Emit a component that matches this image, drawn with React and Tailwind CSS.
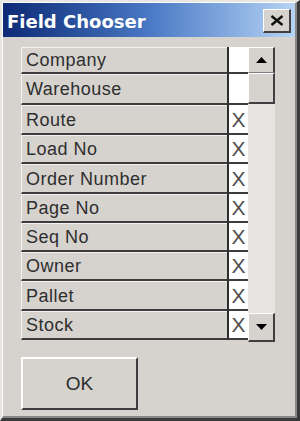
import React from "react";

const rows = [
  { label: "Company", h: "h-[27px]", x: false },
  { label: "Warehouse", h: "h-[31px]", x: false },
  { label: "Route", h: "h-[30px]", x: true },
  { label: "Load No", h: "h-[29px]", x: true },
  { label: "Order Number", h: "h-[30px]", x: true },
  { label: "Page No", h: "h-[29px]", x: true },
  { label: "Seq No", h: "h-[29px]", x: true },
  { label: "Owner", h: "h-[29px]", x: true },
  { label: "Pallet", h: "h-[30px]", x: true },
  { label: "Stock", h: "h-[29px]", x: true },
];

function Tri({ down }) {
  return (
    <svg width="11" height="6" viewBox="0 0 11 6">
      {down ? (
        <polygon points="0,0 11,0 5.5,6" fill="#000" />
      ) : (
        <polygon points="0,6 11,6 5.5,0" fill="#000" />
      )}
    </svg>
  );
}

export default function App() {
  return (
    <div className="w-[300px] h-[421px] bg-[#d6d3ce] border-t-2 border-l-2 border-t-[#e8e6e2] border-l-[#e8e6e2] border-r-[3px] border-b-[3px] border-r-[#3a3a3a] border-b-[#3a3a3a] flex flex-col overflow-hidden">
      <div className="flex-1 flex flex-col border-t border-l border-t-white border-l-white border-r-2 border-b-2 border-r-[#8a8886] border-b-[#8a8886]">
        {/* title bar */}
        <div className="h-[34px] flex items-center pl-[4px] pr-[4px] bg-gradient-to-r from-[#0e2a76] via-[#4a78c4] to-[#b6d4f4]">
          <span className="text-white font-bold text-[18px] leading-none mt-[4px] tracking-[0px] [font-family:'DejaVu_Sans',sans-serif]">
            Field Chooser
          </span>
          <div className="ml-auto w-[28px] h-[24px] bg-[#d6d3ce] border-t border-l border-t-white border-l-white border-r-2 border-b-2 border-r-[#404040] border-b-[#404040] flex items-center justify-center mt-[1px]">
            <svg width="14" height="11" viewBox="0 0 14 11">
              <path d="M1.5 1 L12.5 10 M12.5 1 L1.5 10" stroke="#111" strokeWidth="2.4" />
            </svg>
          </div>
        </div>

        {/* body */}
        <div className="flex flex-col pl-[18px] pt-[10px]">
          <div className="flex items-start">
            <div className="flex flex-col">
              {rows.map((r) => (
                <div key={r.label} className={`flex ${r.h}`}>
                  <div className="w-[206px] bg-[#d6d3ce] border-t border-l border-t-[#f4f3f1] border-l-[#f4f3f1] border-b-2 border-b-[#3c3c3c] flex items-center pl-[4px]">
                    <span className="text-[18px] leading-none tracking-[0.5px] text-[#2e2e2e] [font-family:'Liberation_Sans',Arial,sans-serif]">
                      {r.label}
                    </span>
                  </div>
                  <div className="w-[2px] bg-[#2e2e2e]" />
                  <div className="w-[19px] bg-white border-b-2 border-b-[#3c3c3c] flex items-center justify-center">
                    {r.x && (
                      <span className="text-[21px] leading-none text-[#505050] [font-family:'Liberation_Sans',Arial,sans-serif]">
                        X
                      </span>
                    )}
                  </div>
                </div>
              ))}
            </div>
            {/* scrollbar */}
            <div className="w-[27px] h-[295px] flex flex-col">
              <div className="h-[26px] bg-[#d6d3ce] border-t border-l border-t-white border-l-white border-r-2 border-b border-r-[#404040] border-b-[#808080] flex items-center justify-center">
                <Tri />
              </div>
              <div className="h-[31px] bg-[#d6d3ce] border-t border-l border-t-white border-l-white border-r-2 border-b-2 border-r-[#404040] border-b-[#404040]" />
              <div className="flex-1 bg-[#e6e4e0]" />
              <div className="h-[29px] bg-[#d6d3ce] border-t border-l border-t-white border-l-white border-r-2 border-b-2 border-r-[#404040] border-b-[#404040] flex items-center justify-center">
                <Tri down />
              </div>
            </div>
          </div>

          {/* OK button */}
          <div className="mt-[15px] w-[117px] h-[53px] bg-[#d6d3ce] border-t-2 border-l-2 border-t-white border-l-white border-r-2 border-b-2 border-r-[#3c3c3c] border-b-[#3c3c3c] flex items-center justify-center">
            <span className="text-[19px] leading-none text-[#2e2e2e] [font-family:'Liberation_Sans',Arial,sans-serif]">
              OK
            </span>
          </div>
        </div>
      </div>
    </div>
  );
}
